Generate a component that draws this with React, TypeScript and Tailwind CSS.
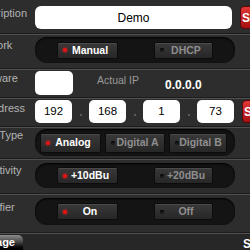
import React from "react";

const Led = ({ on }: { on: boolean }) => (
  <span
    className={
      on
        ? "w-[4px] h-[4px] shrink-0 rounded-full bg-[#e81414] shadow-[0_0_3px_#ff2020]"
        : "w-[4px] h-[4px] shrink-0 rounded-full bg-[#1c1c1c] shadow-[inset_0_1px_1px_#000]"
    }
  />
);

const SegButton = ({
  label,
  on,
  w = "w-[61px]",
  h = "h-[17px]",
}: {
  label: string;
  on: boolean;
  w?: string;
  h?: string;
}) => (
  <div
    className={`${w} ${h} shrink-0 flex items-center pl-[5px] pr-[4px] rounded-[2px] border border-[#0c0c0c] bg-gradient-to-b from-[#393939] to-[#272727] shadow-[inset_0_1px_0_#4a4a4a]`}
  >
    <Led on={on} />
    <span
      className={`flex-1 text-center whitespace-nowrap text-[10.5px] leading-none font-bold ${
        on ? "text-white" : "text-[#8e8e8e]"
      }`}
    >
      {label}
    </span>
  </div>
);

const Track = ({ children, className = "" }: { children: React.ReactNode; className?: string }) => (
  <div
    className={`w-[200px] shrink-0 flex items-center rounded-[12px] bg-[#141414] shadow-[inset_0_1px_2px_#000] ${className}`}
  >
    {children}
  </div>
);

const Label = ({ text, pt }: { text: string; pt: string }) => (
  <div className={`w-[82px] shrink-0 pl-[19px] ${pt} text-[11px] leading-none text-[#b4b4b4] whitespace-nowrap`}>
    {text}
  </div>
);

const Sep = () => <div className="h-[2px] border-t border-[#1c1c1c] bg-[#505050]" />;

const RedButton = ({ text }: { text: string }) => (
  <div className="ml-[8px] w-[50px] h-[23px] shrink-0 rounded-[4px] bg-gradient-to-b from-[#e23636] to-[#a50f0f] border border-[#5a0808] flex items-center pl-[1px] text-[12px] leading-none font-bold text-white">
    {text}
  </div>
);

const IpBox = ({ value }: { value: string }) => (
  <div className="w-[37px] h-[23px] shrink-0 rounded-[5px] bg-white flex items-center justify-center text-[11.5px] leading-none text-black">
    {value}
  </div>
);

const Dot = () => (
  <div className="w-[17px] shrink-0 flex justify-center pt-[14px]">
    <span className="w-[2px] h-[2px] rounded-full bg-[#6a6a6a]" />
  </div>
);

export default function App() {
  return (
    <div className="w-[250px] h-[250px] overflow-hidden bg-[#2d2d2d] font-['Liberation_Sans',Arial,sans-serif]">
      <div className="ml-[-47px] w-[360px] flex flex-col">
        {/* Description */}
        <div className="h-[33px] flex items-start pt-[6px]">
          <Label text="Description" pt="pt-[2px]" />
          <div className="w-[197px] h-[23px] shrink-0 rounded-[6px] bg-white flex items-center justify-center text-[12px] leading-none text-black">
            Demo
          </div>
          <RedButton text="Save" />
        </div>
        <Sep />

        {/* Network */}
        <div className="h-[33px] flex items-start pt-[2px]">
          <Label text="Network" pt="pt-[3px]" />
          <Track className="h-[26px] pl-[22px] gap-[36px]">
            <SegButton label="Manual" on />
            <SegButton label="DHCP" on={false} w="w-[59px]" />
          </Track>
        </div>
        <Sep />

        {/* Firmware */}
        <div className="h-[27px] flex items-start pt-[1px]">
          <Label text="Firmware" pt="pt-[2px]" />
          <div className="w-[38px] h-[24px] shrink-0 rounded-[5px] bg-white" />
          <div className="ml-[24px] pt-[4px] text-[10.5px] leading-none text-[#9a9a9a] whitespace-nowrap">
            Actual IP
          </div>
          <div className="ml-[26px] pt-[8px] text-[12px] leading-none font-bold text-white">0.0.0.0</div>
        </div>
        <Sep />

        {/* IP Address */}
        <div className="h-[27px] flex items-start pt-[1px]">
          <Label text="IP Address" pt="pt-[3px]" />
          <IpBox value="192" />
          <Dot />
          <IpBox value="168" />
          <Dot />
          <IpBox value="1" />
          <Dot />
          <IpBox value="73" />
          <RedButton text="Save" />
        </div>
        <Sep />

        {/* Input Type */}
        <div className="h-[30px] flex items-start pt-[1px]">
          <Label text="Input Type" pt="pt-[1px]" />
          <Track className="h-[27px] pl-[5px] gap-[4px]">
            <SegButton label="Analog" on h="h-[20px]" />
            <SegButton label="Digital A" on={false} w="w-[60px]" h="h-[20px]" />
            <SegButton label="Digital B" on={false} w="w-[58px]" h="h-[20px]" />
          </Track>
        </div>
        <Sep />

        {/* Sensitivity */}
        <div className="h-[33px] flex items-start pt-[3px]">
          <Label text="Sensitivity" pt="pt-[2px]" />
          <Track className="h-[25px] pl-[22px] gap-[36px]">
            <SegButton label="+10dBu" on />
            <SegButton label="+20dBu" on={false} w="w-[59px]" />
          </Track>
        </div>
        <Sep />

        {/* Amplifier */}
        <div className="h-[37px] flex items-start pt-[3px]">
          <Label text="Amplifier" pt="pt-[4px]" />
          <Track className="h-[27px] pl-[22px] gap-[36px]">
            <SegButton label="On" on />
            <SegButton label="Off" on={false} w="w-[59px]" />
          </Track>
        </div>
        <Sep />

        {/* Bottom bar */}
        <div className="h-[20px] flex items-start pt-[1px] bg-[#272727]">
          <div className="ml-[12px] w-[58px] h-[15px] shrink-0 rounded-tr-[5px] rounded-tl-[5px] bg-gradient-to-b from-[#8c8c8c] via-[#4a4a4a] via-45% to-[#000] flex items-center justify-end pr-[8px] text-[11px] leading-none font-bold text-white">
            Manage
          </div>
          <div className="w-[220px] shrink-0" />
          <div className="w-[60px] shrink-0 pt-[3px] text-[12px] leading-[12px] font-bold text-white whitespace-nowrap">
            Settings
          </div>
        </div>
      </div>
    </div>
  );
}
